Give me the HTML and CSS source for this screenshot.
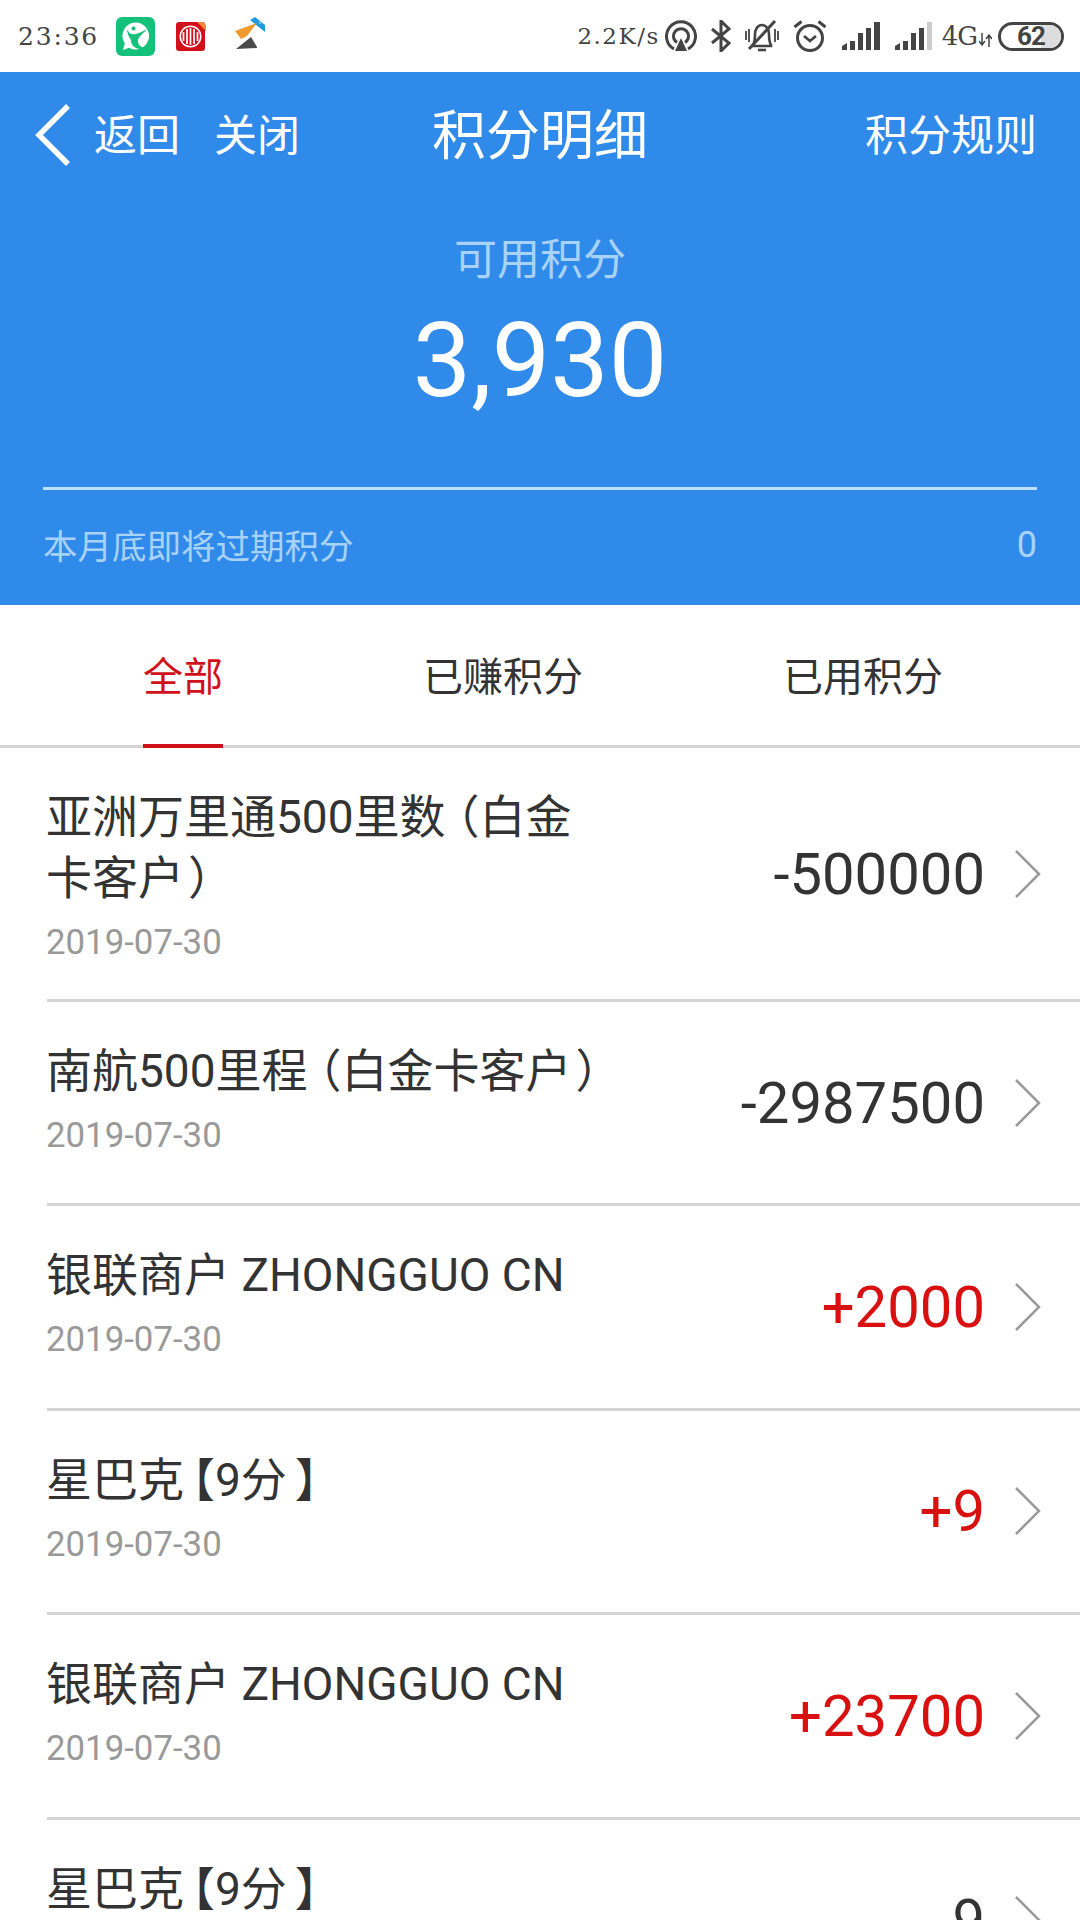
FILE: index.html
```html
<!DOCTYPE html>
<html lang="zh-CN">
<head>
<meta charset="utf-8">
<title>积分明细</title>
<link rel="stylesheet" href="styles.css">
</head>
<body>
<div class="page">
  <div class="status">
    <span class="time">23:36</span>
    <svg class="app app-green" viewBox="0 0 39 39"><rect width="39" height="39" rx="6" fill="#14c17a"/><path d="M19.500 5.500a13.500 13.500 0 1 1-6.500 25.300L7 33l1.800-6.500A13.500 13.500 0 0 1 19.500 5.500z" fill="#fff"/><circle cx="17.500" cy="11.500" r="2" fill="#14c17a"/><path d="M11 12c2 5 5 6 9 5 4-1 7-3 11-5-4 5-8 7-9 11-.5 4 2 7 7 8-7 3-14-1-14-8-2-3-4-7-4-11z" fill="#14c17a"/></svg>
    <svg class="app app-red" viewBox="0 0 30 30"><rect y="1" width="29" height="29" rx="3" fill="#d2101c"/><path d="M21 1h6l3 3v6z" fill="#ee8a3c"/><circle cx="14.500" cy="15.500" r="11" fill="#fff"/><circle cx="14.500" cy="15.500" r="9.500" fill="#d2101c"/><path d="M7.500 11v9M11 8v15M14.500 7v17M18 8v15M21.500 11v9" stroke="#fff" stroke-width="1.700"/></svg>
    <svg class="app app-orange" viewBox="0 0 32 33"><path d="M15 3l5-3 10 8v7z" fill="#1f9be0"/><path d="M24 4.500l2 1.500-1 1z" fill="#fff"/><path d="M0 14L22 6 12 19l-6 3z" fill="#f09a30"/><path d="M1 32L16 20l6 10v1z" fill="#4a4a4a"/></svg>
    <span class="net">2.2K/s</span>
    <svg class="sicon s-hotspot" viewBox="0 0 32 32"><path d="M9 29a14.500 14.500 0 1 1 14 0M12 22.500a7.500 7.500 0 1 1 8 0" fill="none" stroke="#444" stroke-width="3"/><path d="M16 18l6 13H10z" fill="#444"/></svg>
    <svg class="sicon s-bt" viewBox="0 0 22 32"><path d="M2 9l17 14-8 8V1l8 8L2 23" fill="none" stroke="#444" stroke-width="3"/></svg>
    <svg class="sicon s-bell" viewBox="0 0 34 32"><path d="M8 25c2-3 2-6 2-11 0-5 3-9 7-9s7 4 7 9c0 5 0 8 2 11v1H8z" fill="none" stroke="#444" stroke-width="2.600"/><path d="M13 30h8" stroke="#444" stroke-width="2.600"/><path d="M4 29L30 1" stroke="#444" stroke-width="3"/><path d="M1 11v9M4 9v13M30 9v13M33 11v9" stroke="#444" stroke-width="1.800"/></svg>
    <svg class="sicon s-alarm" viewBox="0 0 34 32"><circle cx="17" cy="18" r="12.500" fill="none" stroke="#444" stroke-width="3"/><path d="M11 16l6 5 6-5" fill="none" stroke="#444" stroke-width="2.800"/><path d="M1.500 7l7-5.500M32.500 7l-7-5.500" stroke="#444" stroke-width="3"/></svg>
    <svg class="signal s-one" viewBox="0 0 38 28"><path d="M0 28v-4l5-3v7zM8 28v-9h5v9zM16 28V11h5v17zM24 28V6h5v22zM32 28V0h6v28z" fill="#444"/></svg>
    <svg class="signal s-two" viewBox="0 0 38 28"><path d="M0 28v-4l5-3v7zM8 28v-9h5v9zM16 28V11h5v17zM24 28V6h5v22z" fill="#444"/><path d="M32 28V0h5v28z" fill="#ccc"/></svg>
    <span class="net-type">4G</span>
    <svg class="arrows" viewBox="0 0 13 14"><path d="M3 0v11M0 8l3 4 3-4M10 14V3M7 6l3-4 3 4" fill="none" stroke="#444" stroke-width="1.500"/></svg>
    <div class="battery"><div class="battery-fill"></div><span class="battery-text">62</span></div>
  </div>

  <header class="hero">
    <div class="nav">
      <div class="nav-left">
        <svg class="back" viewBox="0 0 38 62"><path d="M35 2L6 31l29 29" fill="none" stroke="#fff" stroke-width="5.500"/></svg>
        <span>返回</span>
        <span>关闭</span>
      </div>
      <h1 class="nav-title">积分明细</h1>
      <span class="nav-right">积分规则</span>
    </div>
    <div class="balance-label">可用积分</div>
    <div class="balance">3,930</div>
    <div class="expire">
      <span>本月底即将过期积分</span>
      <span class="expire-value">0</span>
    </div>
  </header>

  <nav class="tabs">
    <a class="tab tab-active">全部</a>
    <a class="tab">已赚积分</a>
    <a class="tab">已用积分</a>
  </nav>

  <main class="list">
    <div class="row">
      <div class="row-main">
        <div class="row-title">亚洲万里通500里数<span class="open-mark">（</span>白金<br>卡客户<span class="close-mark">）</span></div>
        <div class="row-date">2019-07-30</div>
      </div>
      <div class="amount">-500000</div>
      <svg class="chev" viewBox="0 0 28 50"><path d="M2 2l23 23L2 48" fill="none" stroke="#999" stroke-width="2.500"/></svg>
    </div>
    <div class="row">
      <div class="row-main">
        <div class="row-title">南航500里程<span class="open-mark">（</span>白金卡客户<span class="close-mark">）</span></div>
        <div class="row-date">2019-07-30</div>
      </div>
      <div class="amount">-2987500</div>
      <svg class="chev" viewBox="0 0 28 50"><path d="M2 2l23 23L2 48" fill="none" stroke="#999" stroke-width="2.500"/></svg>
    </div>
    <div class="row">
      <div class="row-main">
        <div class="row-title">银联商户 ZHONGGUO CN</div>
        <div class="row-date">2019-07-30</div>
      </div>
      <div class="amount amount-plus">+2000</div>
      <svg class="chev" viewBox="0 0 28 50"><path d="M2 2l23 23L2 48" fill="none" stroke="#999" stroke-width="2.500"/></svg>
    </div>
    <div class="row">
      <div class="row-main">
        <div class="row-title">星巴克<span class="open-bracket">【</span>9分<span class="close-bracket">】</span></div>
        <div class="row-date">2019-07-30</div>
      </div>
      <div class="amount amount-plus">+9</div>
      <svg class="chev" viewBox="0 0 28 50"><path d="M2 2l23 23L2 48" fill="none" stroke="#999" stroke-width="2.500"/></svg>
    </div>
    <div class="row">
      <div class="row-main">
        <div class="row-title">银联商户 ZHONGGUO CN</div>
        <div class="row-date">2019-07-30</div>
      </div>
      <div class="amount amount-plus">+23700</div>
      <svg class="chev" viewBox="0 0 28 50"><path d="M2 2l23 23L2 48" fill="none" stroke="#999" stroke-width="2.500"/></svg>
    </div>
    <div class="row">
      <div class="row-main">
        <div class="row-title">星巴克<span class="open-bracket">【</span>9分<span class="close-bracket">】</span></div>
        <div class="row-date">2019-07-30</div>
      </div>
      <div class="amount">-9</div>
      <svg class="chev" viewBox="0 0 28 50"><path d="M2 2l23 23L2 48" fill="none" stroke="#999" stroke-width="2.500"/></svg>
    </div>
  </main>
</div>
</body>
</html>
```

FILE: styles.css
```css
* { box-sizing: border-box; }
html, body { margin: 0; padding: 0; background: #fff; }
body { font-family: Roboto, "Noto Sans CJK SC", sans-serif; color: #333; }
.page { width: 1080px; height: 1920px; overflow: hidden; }

.status { height: 72px; display: flex; align-items: center; padding-left: 18px; }
.time { font: 25px/1 "DejaVu Serif", serif; color: #444; width: 98px; letter-spacing: 1.800px; white-space: nowrap; }
.app { flex: none; }
.app-green { width: 39px; height: 39px; }
.app-red { width: 30px; height: 30px; margin-left: 21px; }
.app-orange { width: 32px; height: 33px; margin: -6px 0 0 29px; }
.net { font: 23px/1 "DejaVu Serif", serif; color: #444; margin-left: auto; letter-spacing: 1.500px; }
.sicon { flex: none; height: 32px; }
.s-hotspot { width: 32px; margin-left: 5px; }
.s-bt { width: 22px; margin-left: 13px; }
.s-bell { width: 34px; margin-left: 13px; }
.s-alarm { width: 34px; margin-left: 14px; }
.signal { flex: none; width: 38px; height: 28px; }
.s-one { margin-left: 15px; }
.s-two { margin-left: 15px; }
.net-type { font: 26px/1 "DejaVu Serif", serif; color: #444; margin-left: 9px; letter-spacing: -1px; }
.arrows { flex: none; width: 13px; height: 14px; margin: 8px 0 0 2px; }
.battery { position: relative; flex: none; width: 66px; height: 29px; margin: 0 16px 0 6px; border: 3.500px solid #444; border-radius: 15px; overflow: hidden; display: flex; align-items: center; justify-content: center; }
.battery-fill { position: absolute; top: 0; bottom: 0; right: 0; width: 20px; background: #ddd; }
.battery-text { font: 700 26px/1 Roboto, sans-serif; color: #444; letter-spacing: -1px; position: relative; }

.hero { height: 533px; background: #308aea; padding: 0 43px; color: #fff; }
.nav { height: 118px; display: flex; align-items: center; position: relative; font-size: 43px; font-family: "Noto Sans CJK SC", sans-serif; }
.nav-left { display: flex; align-items: center; gap: 34px; margin-top: 2px; }
.back { width: 38px; height: 62px; margin: 6px -11px 0 -10px; }
.nav-title { position: absolute; left: 0; right: 0; margin: 0; text-align: center; font-size: 54px; font-weight: 400; }
.nav-right { margin: 2px 0 0 auto; position: relative; }
.balance-label { text-align: center; font: 43px/1.2 "Noto Sans CJK SC", sans-serif; color: #a9d2f7; margin-top: 41px; }
.balance { text-align: center; font: 400 104px/1 Roboto, sans-serif; margin-top: 26px; }
.expire { margin-top: 74px; border-top: 3px solid #bfe0fb; height: 107px; padding-top: 32px; display: flex; justify-content: space-between; color: #a9d2f7; font: 34.500px/1.3 "Noto Sans CJK SC", sans-serif; }
.expire-value { font-family: Roboto, sans-serif; font-size: 36px; }

.tabs { height: 143px; padding: 0 137px 0 143px; display: flex; justify-content: space-between; border-bottom: 3px solid #d4d4d4; font: 40px/138px "Noto Sans CJK SC", sans-serif; color: #333; }
.tab { height: 143px; display: block; }
.tab-active { color: #d0101a; border-bottom: 4px solid #d0101a; }

.row { min-height: 204.400px; margin-left: 47px; padding: 39px 38px 0 0; border-bottom: 3px solid #d4d4d4; display: flex; align-items: flex-start; }
.row-main { flex: 1; min-width: 0; padding-bottom: 37px; }
.row-title { font: 46px/61px Roboto, "Noto Sans CJK SC", sans-serif; color: #333; margin-left: -1px; }
.open-mark { margin-left: -12px; }
.close-mark { margin-left: 4px; }
.open-bracket { margin-left: -15px; }
.close-bracket { margin-left: 8px; }
.row-date { font: 34.800px/40px Roboto, sans-serif; color: #999; margin: 13px 0 0 -1px; }
.amount { align-self: center; margin-top: -39px; font: 58px/1 Roboto, sans-serif; color: #333; }
.amount-plus { color: #d8100f; }
.chev { flex: none; align-self: center; margin: -39px 0 0 29px; width: 28px; height: 50px; }
```
